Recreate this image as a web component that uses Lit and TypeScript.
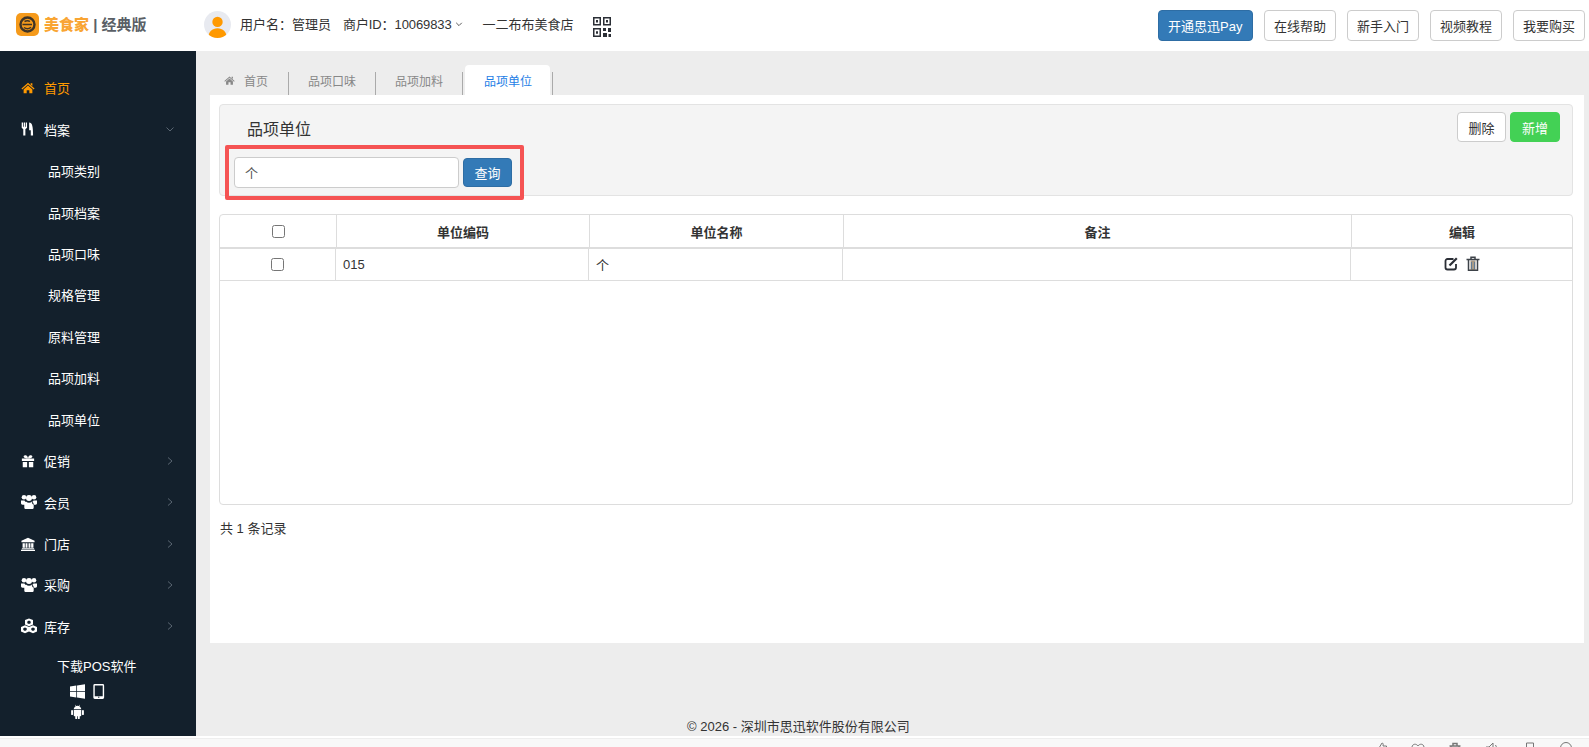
import { LitElement, html, css, svg } from 'lit';
import { customElement } from 'lit/decorators.js';

const ICONS: Record<string, unknown> = {
  home: svg`<path d="M8 2 15.5 8.6 14.6 9.7 8 3.900 1.400 9.700.5 8.600zM11 2.600h2v3.200L11 4zM3 9.600 8 5.200l5 4.400V14H9.500v-3.400h-3V14H3z"/>`,
  cutlery: svg`<path d="M.8.500h1.500v5h.8v-5h1.500v5h.8v-5h1.500v6L5 8.200V15.500H2.600V8.200L.8 6.500zM9.300.500c3.400 0 4.500 4 4.500 15h-2.600V9.500H9.300z"/>`,
  gift: svg`<path d="M1 5h14v3H1zM2 9h5v6H2zM9 9h5v6H9zM7 5h2v3H7zM4.600 1.400c1.600-.5 3 .9 3.400 3.400-2.600 0-4.800-.4-5-1.800-.1-.7.6-1.400 1.600-1.600zM11.400 1.400c1 .2 1.700.9 1.600 1.600-.2 1.400-2.400 1.800-5 1.800.4-2.500 1.800-3.900 3.400-3.400z"/>`,
  group: svg`<circle cx="3" cy="3.300" r="2.300"/><circle cx="13" cy="3.300" r="2.300"/><circle cx="8" cy="4" r="3"/><path d="M0 6.500h3.500c.4 1 1 1.800 1.800 2.200l-1.500 2H1.500C.500 10.700 0 10 0 9zM16 6.500h-3.500c-.4 1-1 1.800-1.800 2.200l1.500 2h2.300c1 0 1.500-.7 1.500-1.700zM5 7.500c.8.800 1.800 1.200 3 1.200s2.200-.4 3-1.200c1 .5 1.700 1.500 1.700 3v3C12.700 14.500 12 15 11 15H5c-1 0-1.700-.5-1.700-1.500v-3c0-1.500.7-2.500 1.700-3z"/>`,
  bank: svg`<path d="M8 .8 15.500 4.300V6H.5V4.300zM1.800 7h2.600v5.200H1.800zM5.200 7h2.200v5.200H5.200zM8.600 7h2.200v5.200H8.600zM11.600 7h2.600v5.200h-2.600zM1 12.800h14V14H1zM0 14.500h16V16H0z"/>`,
  cubes: svg`<path fill-rule="evenodd" d="M8 .5 12 2v4.600L8 8.200 4 6.600V2zM8 2.600 6.300 3.400v1.800L8 6l1.700-.8V3.400zM4 7.300 8 8.900v4.600L4 15.200 0 13.500V8.900zM4 9.500l-1.700.8v1.800L4 12.900l1.700-.8v-1.800zM12 7.300l4 1.600v4.600l-4 1.700-4-1.700V8.900zM12 9.500l-1.700.8v1.800l1.700.8 1.700-.8v-1.800z"/>`,
  windows: svg`<path d="M0 2.600 6.700 1.600v6H0zM7.500 1.500 16 .2v7.400H7.500zM0 8.400h6.700v6L0 13.400zM7.500 8.400H16v7.400l-8.500-1.300z"/>`,
  tablet: svg`<path fill-rule="evenodd" d="M4 0h8.500A1.500 1.500 0 0 1 14 1.500v13a1.500 1.500 0 0 1-1.500 1.500H4a1.500 1.500 0 0 1-1.500-1.500v-13A1.500 1.500 0 0 1 4 0zM4 1.500V13h8.500V1.500zM7.600 13.600h1.300v1H7.600z"/>`,
  android: svg`<path d="M4 5.600c.1-1.500 1-2.600 2.100-3.200L5.400 1l.4-.2.700 1.400a5 5 0 0 1 3 0L10.200.8l.4.2-.7 1.400c1.100.6 2 1.700 2.100 3.200zM4 6.300h8V12a1 1 0 0 1-1 1h-.6v2.200a1 1 0 0 1-2 0V13H7.600v2.200a1 1 0 0 1-2 0V13H5a1 1 0 0 1-1-1zM2.200 6.300a1 1 0 0 1 1 1v3.500a1 1 0 0 1-2 0V7.300a1 1 0 0 1 1-1zM13.800 6.300a1 1 0 0 1 1 1v3.500a1 1 0 0 1-2 0V7.300a1 1 0 0 1 1-1z"/>`,
};

const icon = (name: string) =>
  html`<svg class="ico ${name}" viewBox="0 0 16 16" fill="currentColor">${ICONS[name]}</svg>`;

const chevron = (dir: 'down' | 'right') =>
  html`<svg class="chev" viewBox="0 0 10 10" fill="none" stroke="currentColor" stroke-width="1">
    <path d=${dir === 'down' ? 'M1.500 3.500 5 7l3.500-3.500' : 'M3 1.500 7 5 3 8.500'} />
  </svg>`;

// tops of the browser toolbar icons, cut off by the bottom edge of the shot
const STRIP = [
  svg`<path d="M5 14V7l3-5c1 0 1.500 1 1 3h3.500v9"/>`,
  svg`<path d="M7 5C5.500 2.500 1.500 2.500 1 6c0 3 3 6 6 8 3-2 6-5 6-8-.5-3.500-4.500-3.500-6-1z"/>`,
  svg`<path d="M1.500 5h11M5 5V2.500h4V5M3 5v9M11 5v9" stroke-width="1.500"/>`,
  svg`<path d="M1 6h3l4-4v12M10.500 4c1.500 2 1.500 6 0 8"/>`,
  svg`<path d="M4.500 2h7v9M4.500 2v12M1 7h3.500"/>`,
  svg`<circle cx="7" cy="7" r="5.500"/>`,
];

const MENU = [
  { label: '首页', icon: 'home', active: true },
  { label: '档案', icon: 'cutlery', arrow: 'down' },
  { label: '品项类别', sub: true },
  { label: '品项档案', sub: true },
  { label: '品项口味', sub: true },
  { label: '规格管理', sub: true },
  { label: '原料管理', sub: true },
  { label: '品项加料', sub: true },
  { label: '品项单位', sub: true },
  { label: '促销', icon: 'gift', arrow: 'right' },
  { label: '会员', icon: 'group', arrow: 'right' },
  { label: '门店', icon: 'bank', arrow: 'right' },
  { label: '采购', icon: 'group', arrow: 'right' },
  { label: '库存', icon: 'cubes', arrow: 'right' },
];

@customElement('app-root')
export class AppRoot extends LitElement {
  static styles = css`
    :host {
      display: flex;
      flex-direction: column;
      height: 100vh;
      overflow: hidden;
      position: relative;
      font-family: 'Liberation Sans', 'Noto Sans CJK SC', sans-serif;
      font-size: 13px;
      color: #333;
      background: #fff;
    }
    .ico { width: 14px; height: 14px; flex: none; display: block; }
    .chev { width: 10px; height: 10px; flex: none; display: block; }

    /* top bar */
    .top { height: 51px; flex: none; display: flex; align-items: center; background: #fff; }
    .logo { margin-left: 16px; width: 23px; height: 23px; border-radius: 5px; background: #f59a1b; flex: none; display: flex; align-items: center; justify-content: center; margin-top: -2px; }
    .brand { margin-left: 5px; width: 160px; flex: none; font-size: 15px; font-weight: 700; white-space: nowrap; color: #5a5f66; margin-top: -4px; }
    .brand b { color: #f9a533; }
    .avatar { width: 27px; height: 27px; border-radius: 50%; background: #e8eaf0; overflow: hidden; flex: none; margin-top: -2px; }
    .avatar svg { display: block; width: 100%; height: 100%; }
    .user { margin-left: 9px; white-space: nowrap; margin-top: -5px; }
    .merchant { margin-left: 12px; display: flex; align-items: center; gap: 3px; white-space: nowrap; margin-top: -5px; letter-spacing: -0.1px; }
    .merchant .chev { width: 8px; height: 8px; color: #333; margin-top: 2px; }
    .shop { margin-left: 20px; white-space: nowrap; margin-top: -5px; }
    .qr { margin-left: 19px; width: 18px; height: 20px; display: block; flex: none; margin-top: 3px; }
    .top-actions { margin-left: auto; margin-right: 4px; display: flex; gap: 11px; margin-top: -1px; }
    .btn { box-sizing: border-box; height: 31px; padding: 0 9px; border: 1px solid #ccc; border-radius: 4px; background: #fff; color: #333; font: inherit; white-space: nowrap; }
    .btn.primary { background: #337ab7; border-color: #2e6da4; color: #fff; }
    .btn.ok { background: #43d155; border-color: #43d155; color: #fff; }
    .top-actions .primary { padding: 0 9.500px; }

    /* body */
    .body { flex: 1; min-height: 0; display: flex; }
    .side { width: 196px; flex: none; background: #13202c; color: #fff; padding-top: 16px; box-sizing: border-box; overflow: hidden; }
    .item { height: 41.450px; display: flex; align-items: center; padding-left: 21px; padding-right: 21px; }
    .item .label { margin-left: 9px; }
    .item .ico.group, .item .ico.cubes { width: 16px; height: 16px; margin-right: -2px; }
    .item.active { color: #f90; }
    .item.sub { padding-left: 48px; }
    .item.sub .label { margin-left: 0; }
    .item .chev { margin-left: auto; color: #5a6672; }
    .download { padding-left: 57px; margin-top: 11px; line-height: 18px; }
    .platforms { margin: 8px 0 0 70px; display: flex; flex-wrap: wrap; width: 40px; gap: 5px 6px; }
    .platforms .ico { width: 15px; height: 15px; }

    .main { flex: 1; min-width: 0; background: #ededed; display: flex; flex-direction: column; padding: 14px 5px 0 14px; }
    .tabs { height: 30px; flex: none; display: flex; font-size: 12px; color: #888; }
    .tab { display: flex; align-items: center; gap: 9px; height: 30px; padding: 0 20px 0 19px; border-top-left-radius: 4px; border-top-right-radius: 4px; position: relative; }
    .tab::after { content: ''; position: absolute; right: 0; top: 7px; bottom: 0; width: 1px; background: #aaa; }
    .tab.home { padding: 0 21px 0 14px; }
    .tab .ico { width: 11px; height: 11px; color: #888; }
    .tab.on { background: #fff; color: #1e7ee6; margin-left: 2px; padding: 0 18px 0 19px; }
    .tab.on::after { right: -3px; }

    .panel { height: 548px; flex: none; background: #fff; box-sizing: border-box; padding: 9px 11px 0 9px; }
    .well { position: relative; box-sizing: border-box; height: 92px; background: #f4f4f4; border: 1px solid #e3e3e3; border-radius: 4px; padding: 12px 0 0 14px; }
    .well-head { display: flex; justify-content: space-between; padding-right: 12px; height: 39px; }
    .well-title { font-size: 16px; padding-left: 13px; margin-top: -1px; }
    .well-actions { display: flex; gap: 4px; margin-top: -5px; }
    .well-actions .btn { height: 30px; width: 49px; padding: 0; }
    .well-actions .btn.ok { width: 50px; }
    .search { display: flex; align-items: center; gap: 4px; margin-top: 1px; }
    .search input { box-sizing: border-box; width: 225px; height: 31px; border: 1px solid #ccc; border-radius: 4px; padding: 0 10px; font: inherit; color: #555; background: #fff; outline: none; }
    .search .btn { width: 49px; height: 29px; padding: 0; }
    .mark { position: absolute; left: 5px; top: 40px; width: 299px; height: 55px; box-sizing: border-box; border: 4px solid #f55353; border-radius: 2px; pointer-events: none; }

    .grid { margin-top: 18px; height: 291px; box-sizing: border-box; border: 1px solid #ddd; border-radius: 4px; }
    .row { display: grid; align-items: center; }
    .row > div { height: 100%; display: flex; align-items: center; box-sizing: border-box; border-left: 1px solid #ddd; }
    .row > div:first-child { border-left: 0; justify-content: center; }
    .head { height: 32px; grid-template-columns: 116px 253px 254px 508px 1fr; border-bottom: 2px solid #ddd; font-weight: 700; }
    .head > div { justify-content: center; }
    .line { height: 31px; grid-template-columns: 115px 253px 254px 508px 1fr; border-bottom: 1px solid #ddd; }
    .line > div { padding-left: 7px; }
    .line > div:first-child { padding-left: 0; }
    .row input { margin: 0; width: 13px; height: 13px; }
    .edit { justify-content: center; gap: 8px; padding-left: 0 !important; color: #333; }
    .edit svg { display: block; width: 14px; height: 15px; margin-top: -3px; }
    .total { margin: 15px 0 0 1px; line-height: 18px; }

    .foot { margin-top: auto; padding-left: 477px; line-height: 18px; white-space: nowrap; }

    /* browser strip at the bottom edge */
    .strip { height: 11px; flex: none; background: #f8f8f8; border-top: 2px solid #fff; box-sizing: border-box; overflow: hidden; box-shadow: inset 0 1px 0 #eee; }
    .strip-icons { display: flex; justify-content: flex-end; gap: 23px; padding: 3px 16px 0 0; color: #777; }
    .strip-icons svg { width: 14px; height: 14px; display: block; flex: none; }
  `;

  private renderQr() {
    return html`<svg class="qr" viewBox="0 0 18 20" fill="#2b2f36">
      <path fill-rule="evenodd" d="M0 0h8v8.500H0zM1.500 1.500v5.500h5V1.500zM10 0h8v8.500h-8zM11.500 1.500v5.500h5V1.500zM0 11h8v9H0zM1.500 12.500v6h5v-6z"/>
      <path d="M3 3h2v2.500H3zM13 3h2v2.500h-2zM3 14.300h2v2.500H3zM10 11h3v3h-3zM15 11h3v4h-3zM10 16h4v4h-4zM15.500 17H18v3h-2.500z"/>
    </svg>`;
  }

  render() {
    return html`
      <div class="top">
        <div class="logo">
          <svg width="17" height="17" viewBox="0 0 17 17" fill="none">
            <circle cx="8.500" cy="8.500" r="7" stroke="#3f3426" stroke-width="2.400" />
            <path d="M3.500 8.500h9.500M5 11.500c2 1.500 5 1.500 7-.2M5.500 5.500c1.800-1 4-1 5.500 0" stroke="#3f3426" stroke-width="1.500" />
          </svg>
        </div>
        <div class="brand"><b>美食家</b> | 经典版</div>
        <div class="avatar">
          <svg viewBox="0 0 26 26">
            <circle cx="13" cy="10.500" r="5" fill="#f90" />
            <path d="M4 26c0-6 4-9.500 9-9.500s9 3.500 9 9.500z" fill="#f90" />
          </svg>
        </div>
        <div class="user">用户名：管理员</div>
        <div class="merchant">商户ID：10069833 ${chevron('down')}</div>
        <div class="shop">一二布布美食店</div>
        ${this.renderQr()}
        <div class="top-actions">
          <button class="btn primary">开通思迅Pay</button>
          <button class="btn">在线帮助</button>
          <button class="btn">新手入门</button>
          <button class="btn">视频教程</button>
          <button class="btn">我要购买</button>
        </div>
      </div>

      <div class="body">
        <nav class="side">
          ${MENU.map(
            (m) => html`<div class="item ${m.active ? 'active' : ''} ${m.sub ? 'sub' : ''}">
              ${m.icon ? icon(m.icon) : ''}
              <span class="label">${m.label}</span>
              ${m.arrow ? chevron(m.arrow as 'down' | 'right') : ''}
            </div>`
          )}
          <div class="download">下载POS软件</div>
          <div class="platforms">${icon('windows')} ${icon('tablet')} ${icon('android')}</div>
        </nav>

        <div class="main">
          <div class="tabs">
            <div class="tab home">${icon('home')}<span>首页</span></div>
            <div class="tab">品项口味</div>
            <div class="tab">品项加料</div>
            <div class="tab on">品项单位</div>
          </div>
          <div class="panel">
            <div class="well">
              <div class="well-head">
                <div class="well-title">品项单位</div>
                <div class="well-actions">
                  <button class="btn">删除</button>
                  <button class="btn ok">新增</button>
                </div>
              </div>
              <div class="search">
                <input value="个" />
                <button class="btn primary">查询</button>
              </div>
              <div class="mark"></div>
            </div>

            <div class="grid">
              <div class="row head">
                <div><input type="checkbox" /></div>
                <div>单位编码</div>
                <div>单位名称</div>
                <div>备注</div>
                <div>编辑</div>
              </div>
              <div class="row line">
                <div><input type="checkbox" /></div>
                <div>015</div>
                <div>个</div>
                <div></div>
                <div class="edit">
                  <svg viewBox="0 0 14 15" fill="none" stroke="#2b2f36" stroke-width="1.800">
                    <path d="M9.500 3H3.500A2 2 0 0 0 1.500 5v6.500a2 2 0 0 0 2 2H10a2 2 0 0 0 2-2V8" />
                    <path d="M5.500 9.500 12.800 2.200" stroke-width="2.200" />
                  </svg>
                  <svg viewBox="0 0 14 15" fill="none" stroke="#3d4248" stroke-width="1.500">
                    <path d="M4.500 4.500h5v9.500h-5z" fill="#a89a86" stroke="none" />
                    <path d="M.5 3.500h13M5 3.200V1.200h4v2M2.500 3.500v10.800h9V3.500" />
                    <path d="M5.500 6v7M8.500 6v7" stroke="#5f7a96" stroke-width="1" />
                  </svg>
                </div>
              </div>
            </div>
            <div class="total">共 1 条记录</div>
          </div>
          <div class="foot">© 2026 - 深圳市思迅软件股份有限公司</div>
        </div>
      </div>

      <div class="strip">
        <div class="strip-icons">
          ${STRIP.map(
            (p) => html`<svg viewBox="0 0 14 14" fill="none" stroke="currentColor" stroke-width="1">${p}</svg>`
          )}
        </div>
      </div>
    `;
  }
}
